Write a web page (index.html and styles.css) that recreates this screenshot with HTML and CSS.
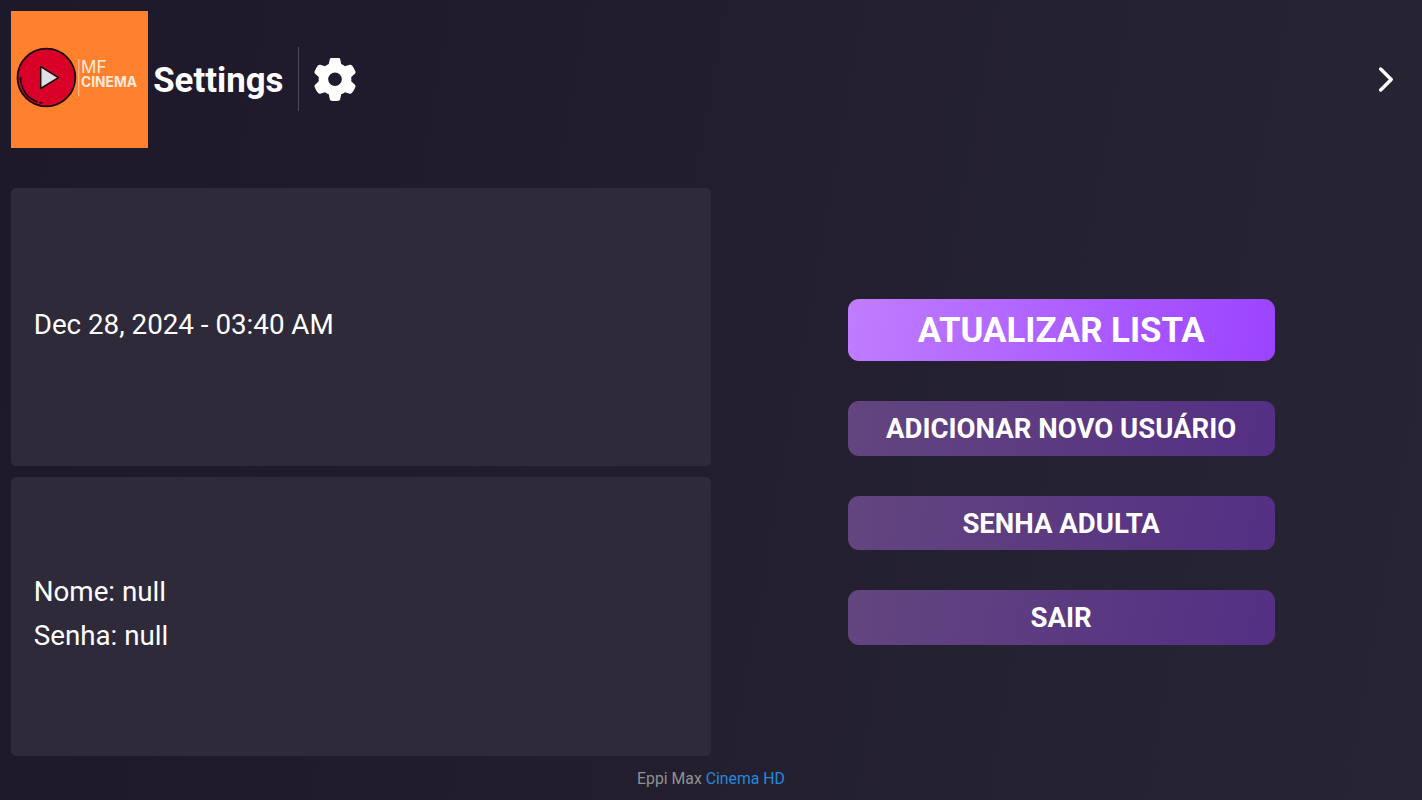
FILE: index.html
```html
<!DOCTYPE html>
<html lang="pt">
<head>
<meta charset="utf-8">
<title>Settings</title>
<link rel="stylesheet" href="styles.css">
</head>
<body>
<div class="screen">
  <header class="header">
    <svg class="logo" viewBox="0 0 137 137">
      <rect width="137" height="137" fill="#ff802d"/>
      <circle cx="35.4" cy="66.5" r="28.9" fill="#d80027" stroke="#160c10" stroke-width="1.8"/>
      <path d="M9.500 66.500c.6 11.500 6.500 20.300 16.300 24.200M28.500 91.500l2.200.400" fill="none" stroke="#160c10" stroke-width="1.700" stroke-linecap="round"/>
      <path d="M29.700 55.700v21.800l17.700-10.900z" fill="#e0e0e2" stroke="#160c10" stroke-width="1.500" stroke-linejoin="round"/>
      <path d="M67.800 48v37.300" stroke="#ffc9a3" stroke-width="1"/>
      <text class="logo-thin" x="70" y="62" textLength="25.500" lengthAdjust="spacingAndGlyphs">MF</text>
      <text class="logo-bold" x="70" y="76" textLength="56" lengthAdjust="spacingAndGlyphs">CINEMA</text>
    </svg>
    <h1 class="title">Settings</h1>
    <span class="divider"></span>
    <svg class="gear" viewBox="0 0 512 512"><path fill="#fff" d="M495.900 166.600c3.200 8.700.5 18.400-6.400 24.600l-43.300 39.400c1.100 8.300 1.700 16.800 1.700 25.400s-.6 17.100-1.700 25.400l43.300 39.400c6.900 6.200 9.600 15.900 6.400 24.600-4.400 11.900-9.700 23.300-15.800 34.300l-4.700 8.100c-6.600 11-14 21.400-22.100 31.200-5.900 7.200-15.700 9.600-24.500 6.800l-55.700-17.700c-13.400 10.300-28.200 18.900-44 25.400l-12.500 57.100c-2 9.100-9 16.300-18.200 17.800-13.800 2.300-28 3.500-42.500 3.500s-28.700-1.200-42.500-3.500c-9.200-1.500-16.200-8.700-18.200-17.800l-12.500-57.100c-15.800-6.500-30.600-15.100-44-25.400l-55.600 17.800c-8.800 2.800-18.600.3-24.500-6.800-8.100-9.800-15.500-20.200-22.100-31.200l-4.700-8.100c-6.100-11-11.400-22.400-15.800-34.300-3.200-8.700-.5-18.400 6.400-24.600l43.300-39.400c-1.100-8.400-1.700-16.900-1.700-25.500s.6-17.100 1.700-25.400l-43.300-39.400c-6.900-6.200-9.600-15.900-6.400-24.600 4.400-11.900 9.700-23.300 15.800-34.300l4.700-8.100c6.600-11 14-21.400 22.100-31.200 5.900-7.200 15.700-9.600 24.500-6.800l55.700 17.700c13.400-10.300 28.200-18.900 44-25.400l12.500-57.100c2-9.100 9-16.300 18.200-17.800C227.300 1.200 241.500 0 256 0s28.700 1.200 42.500 3.500c9.200 1.500 16.200 8.700 18.200 17.800l12.500 57.100c15.800 6.500 30.600 15.100 44 25.400l55.700-17.700c8.800-2.800 18.600-.3 24.500 6.800 8.100 9.800 15.500 20.200 22.100 31.200l4.700 8.100c6.100 11 11.400 22.400 15.800 34.300zM256 336a80 80 0 1 0 0-160 80 80 0 1 0 0 160z"/></svg>
    <svg class="chevron" viewBox="0 0 16 28"><path d="M3.700 4 14.200 14.500 3.700 25" fill="none" stroke="#fff" stroke-width="3.400" stroke-linecap="round" stroke-linejoin="round"/></svg>
  </header>
  <main class="content">
    <section class="panels">
      <div class="panel"><p>Dec 28, 2024 - 03:40 AM</p></div>
      <div class="panel"><p>Nome: null</p><p>Senha: null</p></div>
    </section>
    <nav class="actions">
      <button class="action action-active">ATUALIZAR LISTA</button>
      <button class="action">ADICIONAR NOVO USUÁRIO</button>
      <button class="action">SENHA ADULTA</button>
      <button class="action">SAIR</button>
    </nav>
  </main>
  <footer class="footer">Eppi Max <span>Cinema HD</span></footer>
</div>
</body>
</html>
```
FILE: styles.css
```css
* { box-sizing: border-box; }
body {
  margin: 0;
  font-family: Roboto, sans-serif;
  color: #fff;
}
.screen {
  width: 1422px;
  height: 800px;
  padding: 10.7px;
  display: flex;
  flex-direction: column;
  overflow: hidden;
  background: linear-gradient(100deg, #1d182a 0%, #231f2f 55%, #272533 100%);
}
.header {
  height: 137px;
  display: flex;
  align-items: center;
  flex: none;
}
.logo { width: 137px; height: 137px; }
.logo text { font-family: Inter, sans-serif; fill: #ffeadd; }
.logo .logo-thin { font-size: 17px; font-weight: 400; }
.logo .logo-bold { font-size: 14px; font-weight: 700; }
.title {
  margin: 0 0 0 5.5px;
  padding-top: 2px;
  width: 131px;
  font-size: 34.8px;
  font-weight: 700;
  line-height: 44px;
  white-space: nowrap;
}
.divider {
  width: 1px;
  height: 64px;
  margin: 0 .5px 0 14px;
  background: #4a4756;
}
.gear { width: 44px; height: 44px; margin: 0 0 0 13.5px; padding-top: .4px; }
.chevron { width: 16px; height: 28px; margin: 0 18px 0 auto; }
.content {
  height: 568px;
  margin-top: 40px;
  display: flex;
  flex: none;
}
.panels {
  width: 700.3px;
  display: flex;
  flex-direction: column;
  gap: 11px;
}
.panel {
  flex: 1;
  padding: 0 23px 4px;
  display: flex;
  flex-direction: column;
  justify-content: center;
  border-radius: 5px;
  background: #2e2a3a;
}
.panel p {
  margin: 0;
  font-size: 27.75px;
  line-height: 44.5px;
}
.actions {
  flex: 1;
  display: flex;
  flex-direction: column;
  align-items: center;
  justify-content: center;
  gap: 40px;
}
.action {
  width: 427px;
  height: 54.5px;
  padding: .4px 0 0;
  border: 0;
  border-radius: 11px;
  font: 700 27.55px Roboto, sans-serif;
  color: #fff;
  background: linear-gradient(100deg, #63457f, #542f84);
}
.action-active {
  height: 62.5px;
  padding-top: 1px;
  font-size: 34.8px;
  background: linear-gradient(100deg, #c07dff, #9b43ff);
}
.footer {
  margin-top: 13px;
  font-size: 15.8px;
  line-height: 20px;
  text-align: center;
  color: #919093;
}
.footer span { color: #2588dc; }
```
